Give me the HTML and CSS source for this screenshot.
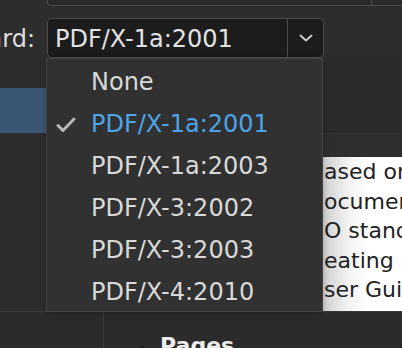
FILE: index.html
```html
<!DOCTYPE html>
<html>
<head>
<meta charset="utf-8">
<link rel="stylesheet" href="styles.css">
</head>
<body>
<div class="stage">
  <div class="top"><div class="field"><span class="sep"></span></div></div>
  <div class="row">
    <span class="lbl">ard:</span>
    <div class="select">
      <span class="val">PDF/X-1a:2001</span>
      <span class="btn"><svg width="14" height="8" viewBox="0 0 14 8"><polyline points="1.5,1.5 7,6.5 12.5,1.5" fill="none" stroke="#d0d0d0" stroke-width="1.8" stroke-linecap="round" stroke-linejoin="round"/></svg></span>
    </div>
  </div>
  <div class="main">
    <div class="side"><div class="selrow"></div></div>
    <div class="center"></div>
    <div class="right">
      <div class="ptop"></div>
      <div class="doc">
        <div class="ln">ased on</div>
        <div class="ln">ocumen</div>
        <div class="ln">O stand</div>
        <div class="ln">eating</div>
        <div class="ln">ser Guid</div>
        <div class="ln">lfold</div>
      </div>
    </div>
  </div>
  <div class="bottom">
    <div class="bleft"></div>
    <div class="bright"><span class="tri"></span><span class="pages">Pages</span></div>
  </div>
  <ul class="menu">
    <li class="item">None</li>
    <li class="item on"><svg class="check" width="20" height="16" viewBox="0 0 20 16"><polyline points="2,8.5 7,13.5 18,2" fill="none" stroke="#b8b8b8" stroke-width="3" stroke-linecap="round" stroke-linejoin="round"/></svg>PDF/X-1a:2001</li>
    <li class="item">PDF/X-1a:2003</li>
    <li class="item">PDF/X-3:2002</li>
    <li class="item">PDF/X-3:2003</li>
    <li class="item">PDF/X-4:2010</li>
  </ul>
</div>
</body>
</html>
```
FILE: styles.css
```css
html, body {
  margin: 0;
  padding: 0;
  background: #2d2d2d;
}
.stage {
  position: relative;
  width: 402px;
  height: 348px;
  overflow: hidden;
  font-family: "DejaVu Sans", sans-serif;
  font-size: 24px;
  color: #dcdcdc;
}
.top {
  height: 7px;
  padding-left: 47px;
}
.field {
  position: relative;
  height: 6px;
  margin-top: -1px;
  border-left: 1px solid #4a4a4a;
  border-bottom: 1px solid #4a4a4a;
  border-bottom-left-radius: 4px;
  background: #2a2a2a;
  display: flex;
  justify-content: flex-end;
  padding-right: 30px;
}
.sep {
  width: 1px;
  background: #4a4a4a;
}
.row {
  display: flex;
  align-items: center;
  gap: 12px;
  margin-top: 12px;
  height: 40px;
}
.lbl {
  width: 35px;
  display: flex;
  justify-content: flex-end;
  white-space: nowrap;
  line-height: 40px;
  padding-top: 2px;
  color: #dedede;
}
.select {
  box-sizing: border-box;
  width: 277px;
  height: 40px;
  display: flex;
  align-items: stretch;
  background: #1c1c1c;
  border: 1px solid #4b4b4b;
  border-radius: 5px;
}
.val {
  flex: 1;
  padding-left: 7px;
  padding-top: 2px;
  line-height: 36px;
  color: #e2e2e2;
}
.btn {
  width: 35px;
  border-left: 1px solid #4b4b4b;
  display: flex;
  align-items: center;
  justify-content: center;
}
.main {
  display: flex;
  height: 253px;
}
.side {
  width: 46px;
}
.selrow {
  margin-top: 30px;
  height: 45px;
  background: #3b5673;
}
.center {
  flex: 1;
}
.right {
  width: 79px;
  display: flex;
  flex-direction: column;
}
.ptop {
  height: 99px;
  box-sizing: border-box;
  border-bottom: 26px solid #2e2e2e;
  background: #2b2b2b;
}
.ptop::after {
  content: "";
  display: block;
  height: 73px;
  border-bottom: 1px solid #252525;
}
.doc {
  flex: 1;
  overflow: hidden;
  background: linear-gradient(to right, #cfcfcf 0px, #f2f2f2 25px, #ffffff 45px);
  color: #222;
  font-size: 22px;
  line-height: 29.6px;
  white-space: nowrap;
  padding-left: 1px;
}
.bottom {
  display: flex;
  height: 36px;
  border-top: 1px solid #383838;
  background: #2b2b2b;
}
.bleft {
  width: 103px;
  border-right: 1px solid #3a3a3a;
}
.bright {
  display: flex;
  align-items: flex-start;
  padding-left: 30px;
  padding-top: 21px;
  gap: 10px;
}
.tri {
  width: 0;
  height: 0;
  margin-top: 12px;
  border-left: 8px solid transparent;
  border-right: 8px solid transparent;
  border-bottom: 8px solid #1e1e1e;
}
.pages {
  font-size: 22px;
  font-weight: bold;
  color: #ececec;
  line-height: 26px;
}
.menu {
  position: absolute;
  left: 46px;
  top: 58px;
  width: 277px;
  box-sizing: border-box;
  margin: 0;
  padding: 1px 0 0 0;
  list-style: none;
  background: #313131;
  border: 1px solid #444444;
  height: 254px;
  box-shadow: 0 2px 6px rgba(0,0,0,0.25);
}
.item {
  position: relative;
  height: 40px;
  padding-top: 2px;
  line-height: 40px;
  padding-left: 44px;
  color: #d9d9d9;
  white-space: nowrap;
}
.item.on {
  color: #4ea4e6;
}
.check {
  position: absolute;
  left: 9px;
  top: 15px;
}
```
